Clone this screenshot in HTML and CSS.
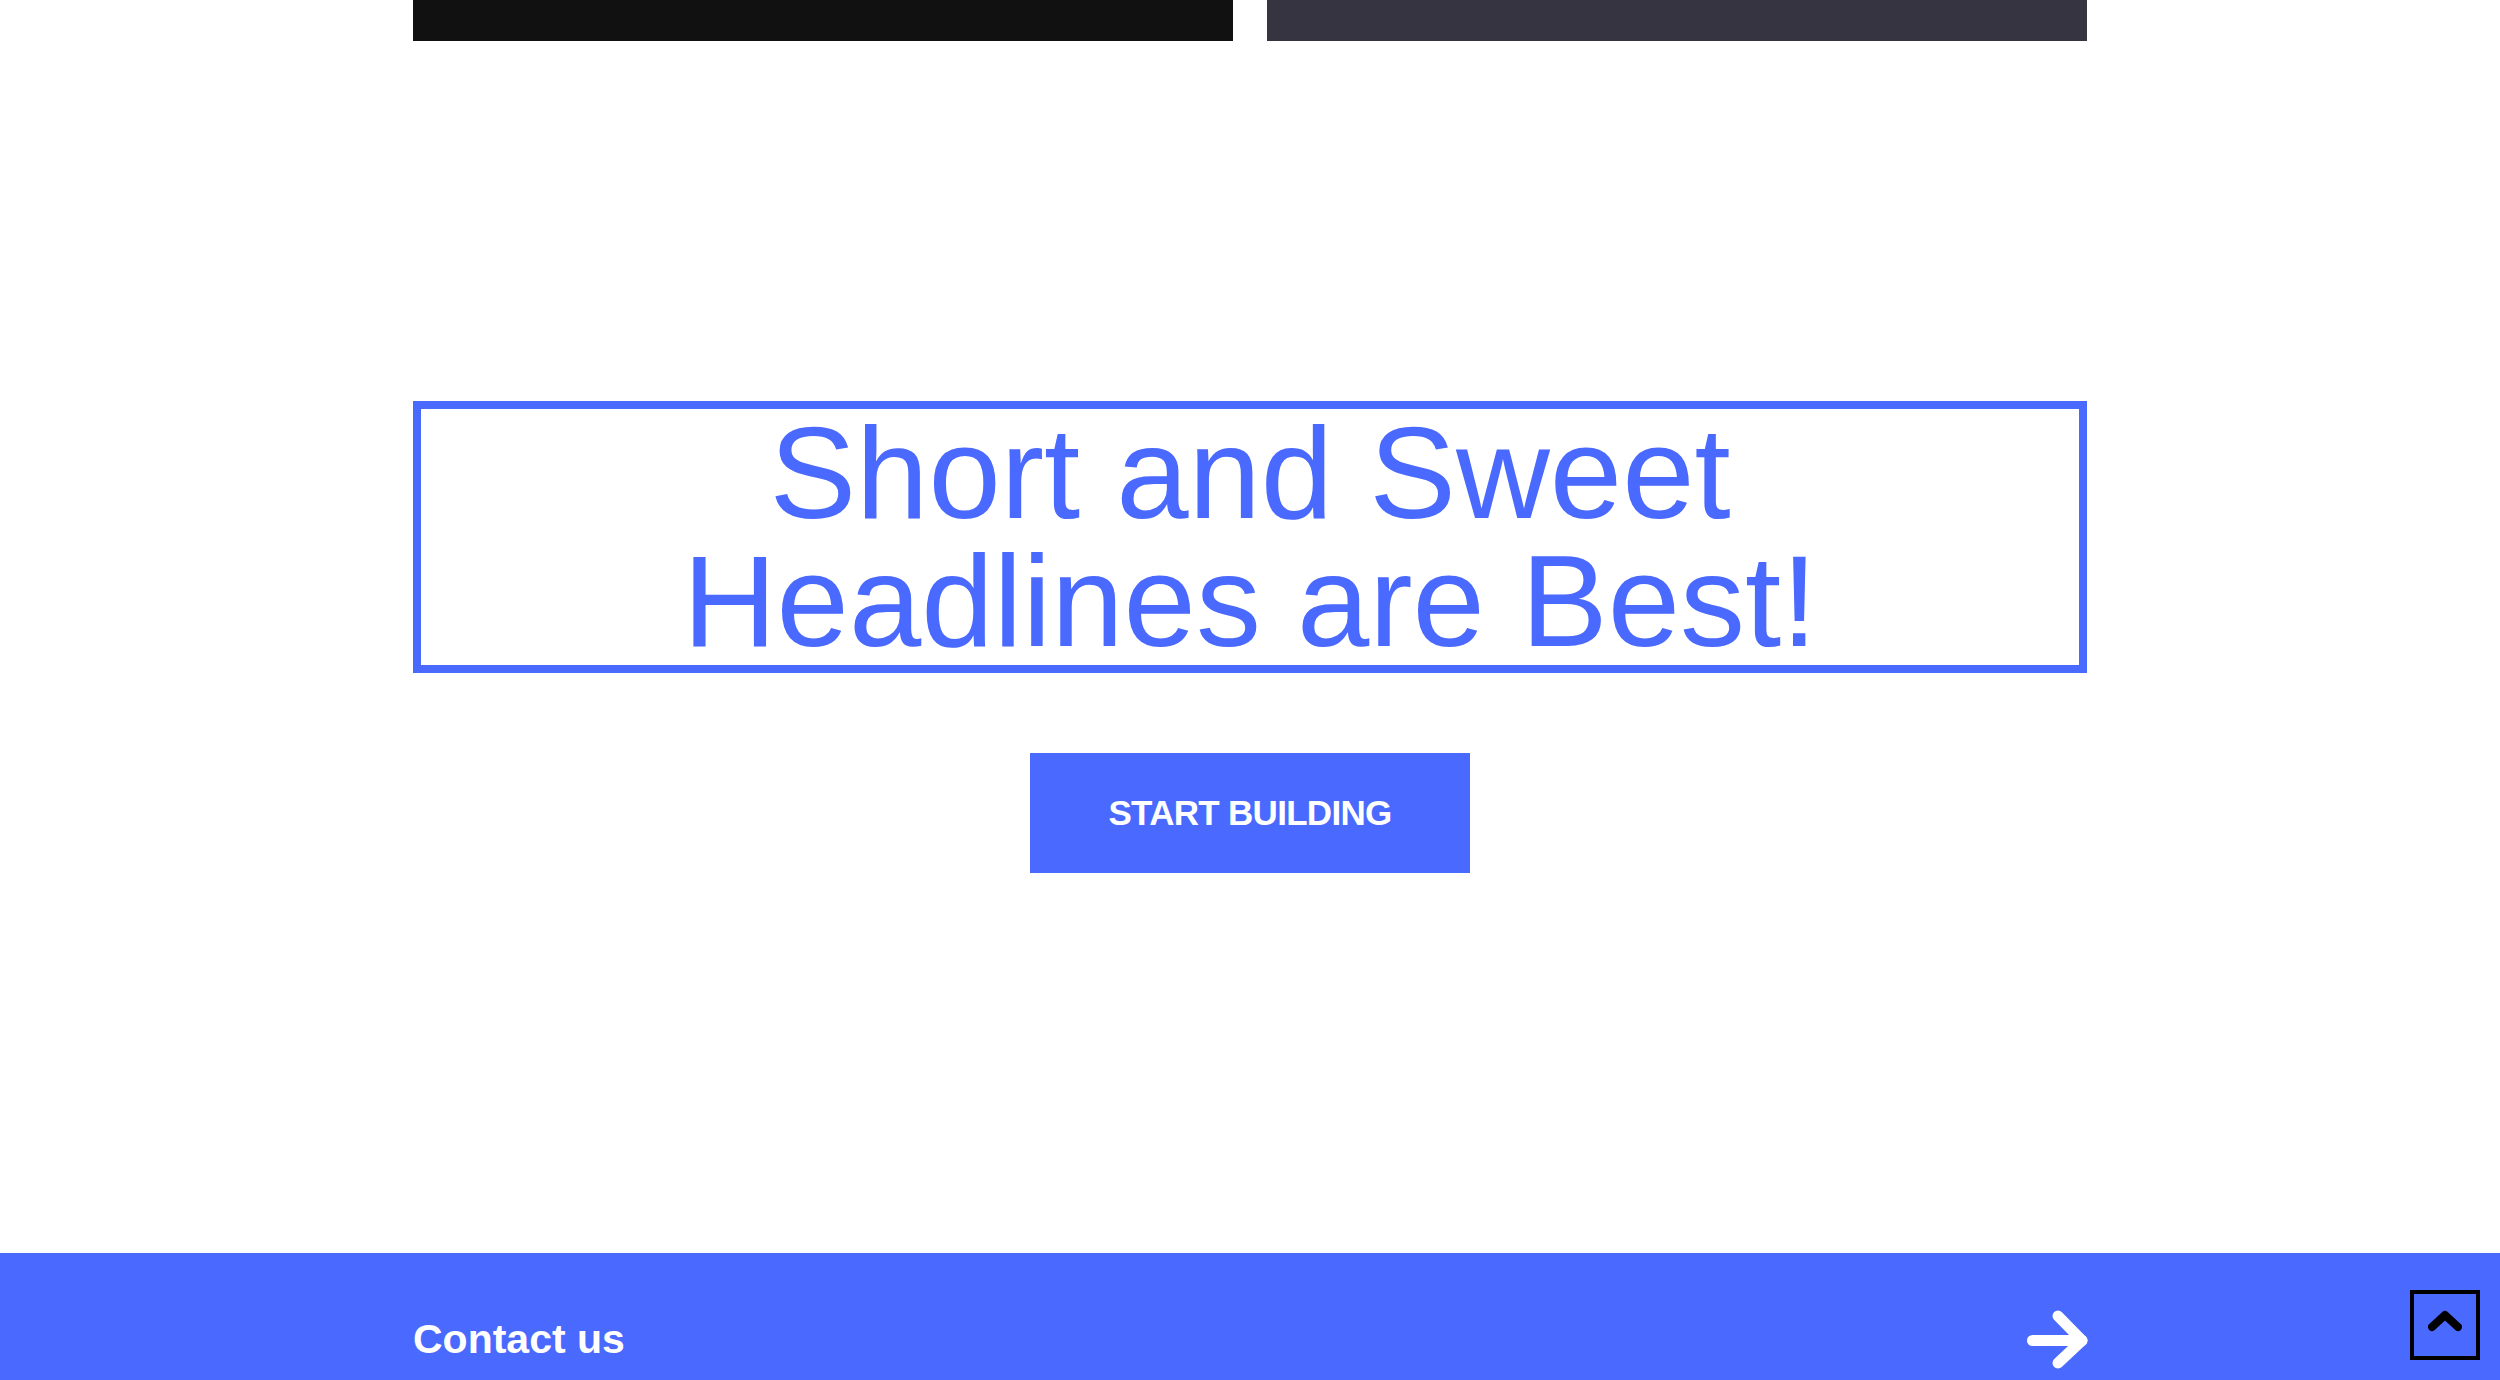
FILE: index.html
```html
<!DOCTYPE html>
<html lang="en">
<head>
<meta charset="utf-8">
<title>Short and Sweet</title>
<link rel="stylesheet" href="styles.css">
</head>
<body>
<main class="page">
  <section class="cards">
    <div class="card card-dark"></div>
    <div class="card card-slate"></div>
  </section>

  <section class="cta">
    <h1 class="headline">Short and Sweet<br>Headlines are Best!</h1>
    <a class="btn" href="#">START BUILDING</a>
  </section>
</main>

<footer class="footer">
  <div class="footer-row">
    <span class="footer-title">Contact us</span>
    <svg class="arrow" width="61" height="59" viewBox="0 0 61 59" aria-hidden="true">
      <path d="M5.5 30.5 H55" fill="none" stroke="#fff" stroke-width="11" stroke-linecap="round"/>
      <path d="M31 6 L55 30.5 L31 53" fill="none" stroke="#fff" stroke-width="11" stroke-linecap="round" stroke-linejoin="round"/>
    </svg>
  </div>
</footer>

<a class="to-top" href="#" aria-label="Back to top">
  <svg width="34" height="24" viewBox="0 0 34 24" aria-hidden="true">
    <path d="M4 18 L17 6 L30 18" fill="none" stroke="#000" stroke-width="8" stroke-linecap="round" stroke-linejoin="round"/>
  </svg>
</a>
</body>
</html>
```

FILE: styles.css
```css
html, body {
  margin: 0;
  padding: 0;
  background: #ffffff;
  font-family: "Liberation Sans", Arial, sans-serif;
}

.page {
  width: 1674px;
  margin: 0 auto;
}

.cards {
  display: grid;
  grid-template-columns: 1fr 1fr;
  gap: 34px;
}

.card {
  height: 41px;
}

.card-dark {
  background: #111111;
}

.card-slate {
  background: #363440;
}

.cta {
  display: flex;
  flex-direction: column;
  align-items: center;
  padding-top: 360px;
  padding-bottom: 380px;
}

.headline {
  box-sizing: border-box;
  width: 100%;
  margin: 0;
  border: 8px solid #4a69ff;
  color: #4a69ff;
  font-family: "Liberation Sans", Arial, sans-serif;
  font-weight: 400;
  font-size: 130px;
  line-height: 128px;
  text-align: center;
}

.btn {
  margin-top: 80px;
  width: 440px;
  height: 120px;
  display: flex;
  align-items: center;
  justify-content: center;
  background: #4a69ff;
  color: #ffffff;
  text-decoration: none;
  font-weight: 700;
  font-size: 35px;
  letter-spacing: -0.7px;
}

.footer {
  background: #4a69ff;
  padding-top: 62px;
  padding-bottom: 80px;
}

.footer-row {
  width: 1674px;
  margin: 0 auto;
  height: 48px;
  display: flex;
  align-items: center;
  justify-content: space-between;
}

.footer-title {
  color: #ffffff;
  font-weight: 700;
  font-size: 41px;
}

.arrow {
  display: block;
  margin-right: -1px;
}

.to-top {
  position: fixed;
  right: 20px;
  bottom: 20px;
  width: 70px;
  height: 70px;
  box-sizing: border-box;
  border: 4px solid #000000;
  display: flex;
  align-items: flex-start;
  justify-content: center;
  padding-top: 15px;
}

.to-top svg {
  display: block;
}
```
